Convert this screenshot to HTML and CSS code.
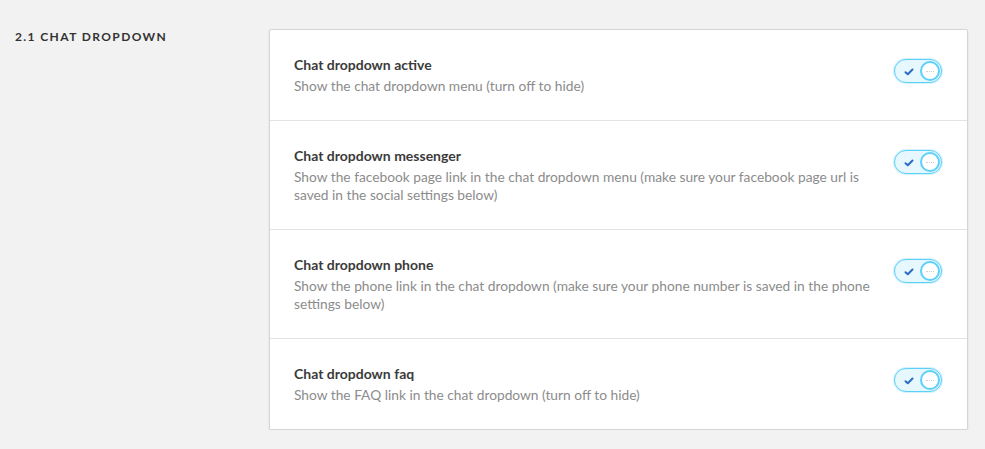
FILE: index.html
```html
<!DOCTYPE html>
<html>
<head>
<meta charset="utf-8">
<link rel="stylesheet" href="styles.css">
</head>
<body>
<div class="page">
  <h2 class="section-title">2.1 Chat dropdown</h2>
  <div class="card">
    <div class="row">
      <div class="text">
        <div class="title">Chat dropdown active</div>
        <div class="desc">Show the chat dropdown menu (turn off to hide)</div>
      </div>
      <div class="toggle"><svg class="check" width="10" height="8" viewBox="0 0 10 8"><path d="M1.5 4.2 L3.8 6.3 L8.5 1.5" fill="none" stroke="#2b6cc4" stroke-width="2" stroke-linecap="round" stroke-linejoin="round"/></svg><span class="knob"><span class="dots"></span></span></div>
    </div>
    <div class="row">
      <div class="text">
        <div class="title">Chat dropdown messenger</div>
        <div class="desc">Show the facebook page link in the chat dropdown menu (make sure your facebook page url is saved in the social settings below)</div>
      </div>
      <div class="toggle"><svg class="check" width="10" height="8" viewBox="0 0 10 8"><path d="M1.5 4.2 L3.8 6.3 L8.5 1.5" fill="none" stroke="#2b6cc4" stroke-width="2" stroke-linecap="round" stroke-linejoin="round"/></svg><span class="knob"><span class="dots"></span></span></div>
    </div>
    <div class="row">
      <div class="text">
        <div class="title">Chat dropdown phone</div>
        <div class="desc">Show the phone link in the chat dropdown (make sure your phone number is saved in the phone settings below)</div>
      </div>
      <div class="toggle"><svg class="check" width="10" height="8" viewBox="0 0 10 8"><path d="M1.5 4.2 L3.8 6.3 L8.5 1.5" fill="none" stroke="#2b6cc4" stroke-width="2" stroke-linecap="round" stroke-linejoin="round"/></svg><span class="knob"><span class="dots"></span></span></div>
    </div>
    <div class="row">
      <div class="text">
        <div class="title">Chat dropdown faq</div>
        <div class="desc">Show the FAQ link in the chat dropdown (turn off to hide)</div>
      </div>
      <div class="toggle"><svg class="check" width="10" height="8" viewBox="0 0 10 8"><path d="M1.5 4.2 L3.8 6.3 L8.5 1.5" fill="none" stroke="#2b6cc4" stroke-width="2" stroke-linecap="round" stroke-linejoin="round"/></svg><span class="knob"><span class="dots"></span></span></div>
    </div>
  </div>
</div>
</body>
</html>
```
FILE: styles.css
```css
* { box-sizing: border-box; }
html, body {
  margin: 0;
  padding: 0;
  background: #f2f2f2;
  font-family: Lato, "Open Sans", sans-serif;
}
.page {
  display: grid;
  grid-template-columns: 254px 1fr;
  padding: 29px 17px 0 15px;
}
.section-title {
  margin: 0;
  font-size: 12px;
  line-height: 16px;
  font-weight: 700;
  letter-spacing: 1.4px;
  text-transform: uppercase;
  color: #333;
}
.card {
  background: #fff;
  border: 1px solid #d5d5d5;
  border-radius: 2px;
  box-shadow: 0 1px 2px rgba(0,0,0,0.12);
}
.row {
  display: flex;
  align-items: flex-start;
  gap: 20px;
  padding: 25px 25px 25px 24px;
  border-bottom: 1px solid #e3e3e3;
}
.row:last-child { border-bottom: none; }
.text { flex: 1; }
.title {
  font-size: 14px;
  line-height: 20px;
  font-weight: 700;
  color: #3b3b3b;
}
.desc {
  margin-top: 2px;
  font-size: 13.75px;
  line-height: 18px;
  color: #8c8c8c;
}
.toggle {
  flex: none;
  width: 48px;
  height: 24px;
  margin-top: 4px;
  border: 1px solid #5cd0f8;
  border-radius: 12px;
  background: #e7f7fe;
  box-shadow: 0 0 0 1px rgba(92,208,248,0.25);
  display: flex;
  align-items: center;
  justify-content: space-between;
  padding: 0 1px 0 9px;
}
.check { display: block; margin-top: 1px; }
.knob {
  width: 20px;
  height: 20px;
  border-radius: 50%;
  background: #fff;
  border: 2px solid #5cd0f8;
  display: flex;
  align-items: center;
  justify-content: center;
}
.dots {
  width: 8px;
  height: 0;
  border-top: 1px dotted #d0d0d0;
  margin-top: 1px;
}
```
